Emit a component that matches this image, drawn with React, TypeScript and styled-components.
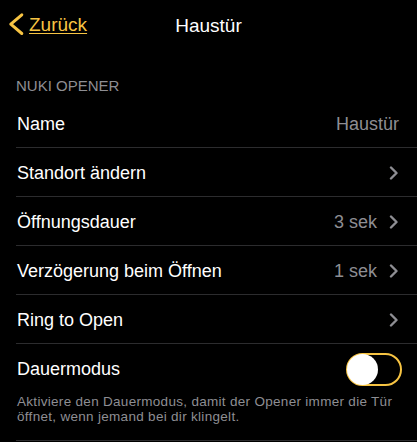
import styled, { createGlobalStyle } from "styled-components";

const GlobalStyle = createGlobalStyle`
    body {
        margin: 0;
        background: #000;
        font-family: "Liberation Sans", Arial, sans-serif;
        -webkit-font-smoothing: antialiased;
    }
`;

const yellow = "#f7c443";
const gray = "#8e8e93";

type Row = { label: string; value?: string; chevron?: boolean };

const rows: Row[] = [
    { label: "Name", value: "Haustür" },
    { label: "Standort ändern", chevron: true },
    { label: "Öffnungsdauer", value: "3 sek", chevron: true },
    { label: "Verzögerung beim Öffnen", value: "1 sek", chevron: true },
    { label: "Ring to Open", chevron: true },
];

const App = () => {
    return (
        <Screen>
            <GlobalStyle />
            <NavBar>
                <BackButton>
                    <svg width="16" height="24" viewBox="0 0 16 24">
                        <path d="M13.8 2.8 L2.8 12.2 L13.8 21.5" fill="none" stroke={yellow} strokeWidth="3" strokeLinecap="round" strokeLinejoin="round" />
                    </svg>
                    <BackLabel>Zurück</BackLabel>
                </BackButton>
                <NavTitle>Haustür</NavTitle>
            </NavBar>
            <SectionHeader>NUKI OPENER</SectionHeader>
            <List>
                {rows.map((row) => (
                    <Cell key={row.label}>
                        <Label>{row.label}</Label>
                        <Trailing>
                            {row.value && <Value>{row.value}</Value>}
                            {row.chevron && (
                                <svg width="10" height="14" viewBox="0 0 10 14">
                                    <path d="M2 1.5 L7.5 7 L2 12.5" fill="none" stroke={gray} strokeWidth="2.4" strokeLinecap="round" strokeLinejoin="round" />
                                </svg>
                            )}
                        </Trailing>
                    </Cell>
                ))}
                <Cell last>
                    <Label>Dauermodus</Label>
                    <Toggle>
                        <Knob />
                    </Toggle>
                </Cell>
            </List>
            <Footer>Aktiviere den Dauermodus, damit der Opener immer die Tür öffnet, wenn jemand bei dir klingelt.</Footer>
        </Screen>
    );
};

export default App;

const Screen = styled.div`
    width: 417px;
    height: 442px;
    background: #000;
    color: #fff;
    overflow: hidden;
`;

const NavBar = styled.div`
    position: relative;
    height: 50px;
    display: flex;
    align-items: center;
    justify-content: center;
`;

const BackButton = styled.div`
    position: absolute;
    left: 8px;
    top: 12px;
    display: flex;
    align-items: center;
    gap: 5px;
`;

const BackLabel = styled.span`
    color: ${yellow};
    font-size: 19px;
    margin-top: 2px;
    text-decoration: underline;
    text-underline-offset: 2px;
    text-decoration-thickness: 1px;
`;

const NavTitle = styled.div`
    font-size: 19px;
    color: #fff;
    margin-top: 2px;
`;

const SectionHeader = styled.div`
    height: 49px;
    box-sizing: border-box;
    display: flex;
    align-items: flex-end;
    padding: 0 16px 4px;
    font-size: 15px;
    line-height: 18px;
    color: ${gray};
`;

const List = styled.div`
    display: flex;
    flex-direction: column;
`;

const Cell = styled.div<{ last?: boolean }>`
    height: 49px;
    box-sizing: border-box;
    margin-left: 16px;
    padding: 2px 18px 0 1px;
    display: flex;
    align-items: center;
    justify-content: space-between;
    border-bottom: ${(props) => (props.last ? "none" : "1px solid #2c2c2e")};
    padding-right: ${(props) => (props.last ? "15px" : "18px")};
`;

const Label = styled.span`
    font-size: 18px;
    color: #fff;
`;

const Trailing = styled.div`
    display: flex;
    align-items: center;
    gap: 12px;
`;

const Value = styled.span`
    font-size: 18px;
    color: ${gray};
`;

const Toggle = styled.div`
    width: 56px;
    height: 33px;
    box-sizing: border-box;
    border: 2px solid ${yellow};
    border-radius: 17px;
    display: flex;
    align-items: center;
`;

const Knob = styled.div`
    width: 31px;
    height: 31px;
    border-radius: 50%;
    background: #fff;
    margin-left: -1px;
`;

const Footer = styled.div`
    margin-left: 16px;
    padding: 1px 20px 16px 1px;
    font-size: 13.5px;
    letter-spacing: 0.3px;
    line-height: 15px;
    color: ${gray};
    border-bottom: 1px solid #2c2c2e;
`;
